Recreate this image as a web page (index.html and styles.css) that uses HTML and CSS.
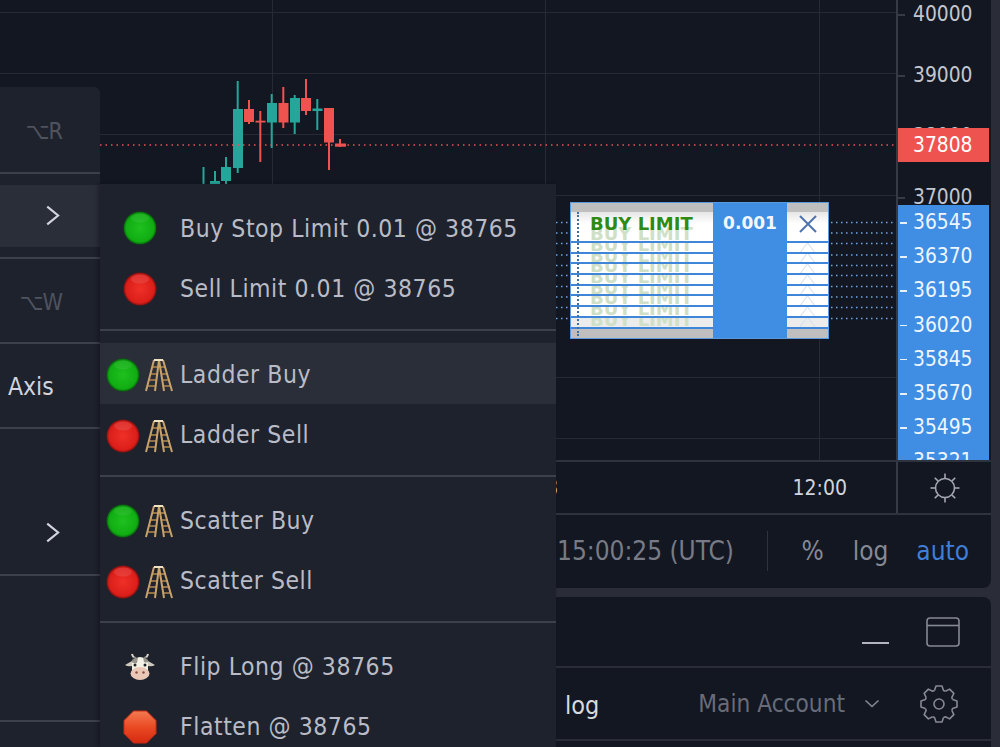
FILE: index.html
```html
<!DOCTYPE html>
<html lang="en">
<head>
<meta charset="utf-8">
<title>Chart order menu</title>
<link rel="stylesheet" href="styles.css">
</head>
<body class="page">
<svg class="defs" width="0" height="0" aria-hidden="true">
  <defs>
    <radialGradient id="g-green" cx="50%" cy="50%" r="50%">
      <stop offset="0" stop-color="#1fc01f"/><stop offset=".85" stop-color="#10ad12"/><stop offset="1" stop-color="#075c0c"/>
    </radialGradient>
    <radialGradient id="g-red" cx="50%" cy="50%" r="50%">
      <stop offset="0" stop-color="#ee3028"/><stop offset=".85" stop-color="#dc1e1a"/><stop offset="1" stop-color="#7e100e"/>
    </radialGradient>
    <linearGradient id="g-stop" x1="0" y1="0" x2="0" y2="1">
      <stop offset="0" stop-color="#f27a50"/><stop offset=".5" stop-color="#ea4a24"/><stop offset="1" stop-color="#d52a10"/>
    </linearGradient>
    <symbol id="ball-green" viewBox="0 0 34 34">
      <circle cx="17" cy="17" r="16.5" fill="url(#g-green)"/>
      <ellipse cx="17" cy="7" rx="9" ry="4.5" fill="#fff" opacity=".07"/>
    </symbol>
    <symbol id="ball-red" viewBox="0 0 34 34">
      <circle cx="17" cy="17" r="16.5" fill="url(#g-red)"/>
      <ellipse cx="17" cy="7" rx="9" ry="4.5" fill="#fff" opacity=".1"/>
    </symbol>
    <symbol id="ladder" viewBox="0 0 28 34">
      <g fill="none" stroke-width="2">
        <path d="M8 9 H13 M6 16 H12 M4.5 22 H11 M3 28 H10 M16 9 H21 M17 16 H23 M18 22 H25 M19 28 H26" stroke="#8f6f48"/>
        <path d="M1 33 L9 2 M10 33 L14 2 M14 2 L19 33 M18 2 L27 33" stroke="#c9a26a"/>
        <path d="M9 2 H18" stroke="#efe2c4"/>
      </g>
    </symbol>
    <symbol id="cow" viewBox="0 0 32 30">
      <path d="M8 3 Q9 7 12 7 M24 3 Q23 7 20 7" fill="none" stroke="#d9d6cc" stroke-width="2"/>
      <path d="M1 14 L8 10 L8 15 Q4 16 1 14 Z M31 14 L24 10 L24 15 Q28 16 31 14 Z" fill="#cfcabd"/>
      <path d="M8 9 Q16 3 24 9 L24 20 L8 20 Z" fill="#f3f0e6"/>
      <path d="M8 7 Q11 5 14 6 L13 12 Q9 13 8 11 Z M24 7 Q21 5 19 6 L20 11 Q23 12 24 11 Z" fill="#3b3836" opacity=".5"/>
      <ellipse cx="16" cy="22.5" rx="9.5" ry="6.5" fill="#e9c8b8"/>
      <circle cx="12.5" cy="21.5" r="1.2" fill="#8a4a3e"/><circle cx="19.5" cy="21.5" r="1.2" fill="#8a4a3e"/>
      <circle cx="11" cy="14" r="1.5" fill="#222"/><circle cx="21" cy="14" r="1.5" fill="#222"/>
    </symbol>
    <symbol id="stop" viewBox="0 0 34 34">
      <path d="M10.5 1 H23.5 L33 10.5 V23.5 L23.5 33 H10.5 L1 23.5 V10.5 Z" fill="url(#g-stop)" stroke="#c92a12" stroke-width="1" stroke-linejoin="round"/>
    </symbol>
    <symbol id="chev-right" viewBox="0 0 14 18">
      <path d="M2.5 2 L11 9 L2.5 16" fill="none" stroke="#d1d4dc" stroke-width="1.7"/>
    </symbol>
    <path id="tooth" d="M-4.5-13.6 L-3-18 H3 L4.5-13.6 L6.43-12.8" fill="none" stroke="#868993" stroke-width="1.6" stroke-linejoin="round"/>
    <path id="ray" d="M0-10 V-14.5" fill="none" stroke="#a3a6af" stroke-width="1.6"/>
  </defs>
</svg>

<section class="panel panel-chart">
  <div class="chart-row">
    <div class="plot">
      <svg class="plot-svg" width="896" height="460" viewBox="0 0 896 460" aria-hidden="true">
        <g class="grid">
          <path d="M0 12.5H896M0 73.5H896M0 134.5H896M0 195.5H896M0 377.5H896M0 438.5H896M272.5 0V460M545.5 0V460M819.5 0V468"/>
        </g>
        <g class="wick-up">
          <path d="M203.5 167V184M215 171V184M226 157V184M237.7 81V173M271.7 94V148M294.7 95V134M317.3 99V130"/>
        </g>
        <g class="wick-down">
          <path d="M249 100V124M260.3 111V162M283.3 87V128M306 79V115M329 108V170M340 139V147"/>
        </g>
        <g class="body-up">
          <rect x="210" y="181" width="10" height="3"/><rect x="221" y="167" width="10" height="14"/><rect x="233" y="109" width="10" height="59"/><rect x="267" y="103" width="10" height="19.5"/><rect x="290" y="98" width="10" height="24.5"/><rect x="312.5" y="108.5" width="10" height="2.5"/>
        </g>
        <g class="body-down">
          <rect x="244" y="109" width="10" height="13"/><rect x="255.5" y="120.7" width="10" height="1.8"/><rect x="278.5" y="103" width="10" height="19.5"/><rect x="301" y="98" width="10" height="13"/><rect x="324" y="108" width="10" height="34.5"/><rect x="335" y="143.5" width="11" height="3.2"/>
        </g>
        <path class="dots-red" d="M100 145H896"/>
        <path class="dots-blue" d="M556 222.5H896M556 233H896M556 243.5H896M556 255H896M556 265.5H896M556 275.5H896M556 286.5H896M556 297H896M556 307.5H896M556 318.5H896"/>
      </svg>
      <div class="order">
        <div class="order-col order-label">
          <div class="strip"></div>
          <div class="order-main">
            <span class="order-ghost">BUY LIMIT</span>
            <span class="order-title">BUY LIMIT</span>
          </div>
          <div class="order-row"><span class="order-ghost">BUY LIMIT</span></div>
          <div class="order-row"><span class="order-ghost">BUY LIMIT</span></div>
          <div class="order-row"><span class="order-ghost">BUY LIMIT</span></div>
          <div class="order-row"><span class="order-ghost">BUY LIMIT</span></div>
          <div class="order-row"><span class="order-ghost">BUY LIMIT</span></div>
          <div class="order-row"><span class="order-ghost">BUY LIMIT</span></div>
          <div class="order-row"><span class="order-ghost">BUY LIMIT</span></div>
          <div class="order-row order-row-last"><span class="order-ghost">BUY LIMIT</span></div>
          <div class="strip"></div>
        </div>
        <div class="order-qty">0.001</div>
        <div class="order-col order-close">
          <div class="strip"></div>
          <div class="order-main">
            <svg class="close-x" width="20" height="20" viewBox="0 0 20 20" aria-hidden="true"><path d="M2 2L18 18M18 2L2 18"/></svg>
          </div>
          <div class="order-row"><span class="ghost-chev"></span></div>
          <div class="order-row"><span class="ghost-chev"></span></div>
          <div class="order-row"><span class="ghost-chev"></span></div>
          <div class="order-row"><span class="ghost-chev"></span></div>
          <div class="order-row"><span class="ghost-chev"></span></div>
          <div class="order-row"><span class="ghost-chev"></span></div>
          <div class="order-row"><span class="ghost-chev"></span></div>
          <div class="order-row order-row-last"><span class="ghost-chev"></span></div>
          <div class="strip"></div>
        </div>
      </div>
    </div>
    <div class="axis">
      <div class="axis-ticks">
        <div class="tick">40000</div>
        <div class="tick">39000</div>
        <div class="tick">38000</div>
        <div class="tick">37000</div>
      </div>
      <div class="badge-last">37808</div>
      <div class="axis-orders">
        <div class="tick-o">36545</div>
        <div class="tick-o">36370</div>
        <div class="tick-o">36195</div>
        <div class="tick-o">36020</div>
        <div class="tick-o">35845</div>
        <div class="tick-o">35670</div>
        <div class="tick-o">35495</div>
        <div class="tick-o">35321</div>
      </div>
    </div>
  </div>
  <div class="time-row">
    <div class="time-labels">
      <span class="time-clip">8</span>
      <span class="time-label">12:00</span>
    </div>
    <div class="time-corner">
      <svg width="32" height="32" viewBox="-16 -16 32 32" aria-hidden="true">
        <circle r="9.5" fill="none" stroke="#a3a6af" stroke-width="1.6"/>
        <use href="#ray"/><use href="#ray" transform="rotate(45)"/><use href="#ray" transform="rotate(90)"/><use href="#ray" transform="rotate(135)"/>
        <use href="#ray" transform="rotate(180)"/><use href="#ray" transform="rotate(225)"/><use href="#ray" transform="rotate(270)"/><use href="#ray" transform="rotate(315)"/>
      </svg>
    </div>
  </div>
  <div class="status-row">
    <span class="clock">15:00:25 (UTC)</span>
    <span class="status-sep"></span>
    <span class="status-item status-pct">%</span>
    <span class="status-item status-log">log</span>
    <span class="status-auto">auto</span>
  </div>
</section>

<section class="panel panel-account">
  <div class="account-head">
    <span class="win-min"></span>
    <svg class="win-max" width="34" height="30" viewBox="0 0 34 30" aria-hidden="true">
      <rect x="1" y="1" width="32" height="28" rx="3"/><path d="M1 8.5H33"/>
    </svg>
  </div>
  <div class="account-row">
    <span class="tab-log">log</span>
    <span class="account-name">Main Account</span>
    <svg class="account-chev" width="16" height="10" viewBox="0 0 16 10" aria-hidden="true"><path d="M1.5 1.5L8 7.5L14.5 1.5"/></svg>
    <svg class="account-gear" width="40" height="40" viewBox="-20 -20 40 40" aria-hidden="true">
      <circle r="5" fill="none" stroke="#868993" stroke-width="1.6"/>
      <use href="#tooth"/><use href="#tooth" transform="rotate(45)"/><use href="#tooth" transform="rotate(90)"/><use href="#tooth" transform="rotate(135)"/>
      <use href="#tooth" transform="rotate(180)"/><use href="#tooth" transform="rotate(225)"/><use href="#tooth" transform="rotate(270)"/><use href="#tooth" transform="rotate(315)"/>
    </svg>
  </div>
</section>

<nav class="side-menu">
  <div class="side-row side-row-first"><span class="shortcut">⌥R</span></div>
  <div class="side-row side-row-active"><span class="side-hi"><svg class="side-chev" width="18" height="23" aria-hidden="true"><use href="#chev-right"/></svg></span></div>
  <div class="side-row"><span class="shortcut">⌥W</span></div>
  <div class="side-row"><span class="side-text">Axis</span></div>
  <div class="side-row side-row-tall"><svg class="side-chev" width="18" height="23" aria-hidden="true"><use href="#chev-right"/></svg></div>
  <div class="side-row side-row-blank"></div>
  <div class="side-row side-row-end"></div>
</nav>

<div class="submenu">
  <div class="sub-section">
    <div class="sub-item"><span class="sub-icons"><svg width="34" height="34" aria-hidden="true"><use href="#ball-green"/></svg></span><span>Buy Stop Limit 0.01 @ 38765</span></div>
    <div class="sub-item"><span class="sub-icons"><svg width="34" height="34" aria-hidden="true"><use href="#ball-red"/></svg></span><span>Sell Limit 0.01 @ 38765</span></div>
  </div>
  <div class="sub-section">
    <div class="sub-item sub-item-hover"><span class="sub-icons sub-icons-pair"><svg width="34" height="34" aria-hidden="true"><use href="#ball-green"/></svg><svg width="28" height="34" aria-hidden="true"><use href="#ladder"/></svg></span><span>Ladder Buy</span></div>
    <div class="sub-item"><span class="sub-icons sub-icons-pair"><svg width="34" height="34" aria-hidden="true"><use href="#ball-red"/></svg><svg width="28" height="34" aria-hidden="true"><use href="#ladder"/></svg></span><span>Ladder Sell</span></div>
  </div>
  <div class="sub-section">
    <div class="sub-item"><span class="sub-icons sub-icons-pair"><svg width="34" height="34" aria-hidden="true"><use href="#ball-green"/></svg><svg width="28" height="34" aria-hidden="true"><use href="#ladder"/></svg></span><span>Scatter Buy</span></div>
    <div class="sub-item"><span class="sub-icons sub-icons-pair"><svg width="34" height="34" aria-hidden="true"><use href="#ball-red"/></svg><svg width="28" height="34" aria-hidden="true"><use href="#ladder"/></svg></span><span>Scatter Sell</span></div>
  </div>
  <div class="sub-section sub-section-end">
    <div class="sub-item"><span class="sub-icons"><svg width="32" height="30" aria-hidden="true"><use href="#cow"/></svg></span><span>Flip Long @ 38765</span></div>
    <div class="sub-item"><span class="sub-icons"><svg width="34" height="34" aria-hidden="true"><use href="#stop"/></svg></span><span>Flatten @ 38765</span></div>
  </div>
</div>
</body>
</html>
```

FILE: styles.css
```css
* { box-sizing: border-box; }
html, body { margin: 0; padding: 0; }
.page {
  position: relative;
  width: 1000px;
  height: 747px;
  overflow: hidden;
  padding-right: 9px;
  display: flex;
  flex-direction: column;
  gap: 9px;
  background: #2a2d38;
  font-family: "DejaVu Sans Condensed", "DejaVu Sans", sans-serif;
  font-stretch: condensed;
  color: #c3c6cf;
}
.defs { position: absolute; }
.panel { background: #131722; }
.panel-chart { height: 588px; flex: none; border-bottom-right-radius: 8px; display: flex; flex-direction: column; }
.panel-account { flex: 1; border-top-right-radius: 8px; display: flex; flex-direction: column; }

.chart-row { display: flex; height: 460px; flex: none; }
.plot { position: relative; width: 896px; flex: none; }
.plot-svg { display: block; }
.grid path { fill: none; stroke: #262a35; stroke-width: 1; }
.wick-up path { fill: none; stroke: #26a69a; stroke-width: 2; }
.wick-down path { fill: none; stroke: #ef5350; stroke-width: 2; }
.body-up rect { fill: #26a69a; }
.body-down rect { fill: #ef5350; }
.dots-red { fill: none; stroke: #ef5350; stroke-width: 1.5; stroke-dasharray: 1.5 4; }
.dots-blue { fill: none; stroke: #6da9ea; stroke-width: 1.5; stroke-dasharray: 1.5 3.5; }

.order {
  position: absolute;
  left: 570px;
  top: 202px;
  width: 259px;
  height: 137px;
  display: flex;
  border: 1px solid #5c9ae0;
  background: #3f8ee4;
  font-family: "DejaVu Sans", sans-serif;
  font-stretch: normal;
  font-weight: 700;
}
.order-col { display: flex; flex-direction: column; overflow: hidden; position: relative; }
.order-label { width: 142px; }
.order-close { width: 41px; }
.order-label::before {
  content: "";
  position: absolute;
  z-index: 2;
  left: 6px;
  top: 9px;
  bottom: 2px;
  border-left: 2px dotted #3f6fa8;
}
.strip { height: 9px; flex: none; background: #bfbfbf; }
.order-main {
  height: 31px;
  flex: none;
  position: relative;
  background: linear-gradient(#e6e6e6, #fff 40%);
  border-bottom: 2px solid #3f85d8;
  overflow: hidden;
}
.order-title { position: absolute; left: 19px; top: 2px; font-size: 18px; line-height: 20px; color: #2f8a12; }
.order-ghost { font-size: 18px; line-height: 20px; color: #cfe0c6; white-space: nowrap; }
.order-main .order-ghost { position: absolute; left: 19px; top: 12px; }
.order-row {
  height: 10.7px;
  flex: none;
  position: relative;
  background: #fff;
  border-bottom: 2px solid #3f85d8;
  overflow: hidden;
}
.order-row .order-ghost { position: absolute; left: 19px; top: -8px; }
.order-row-last { background: #ececec; }
.order-qty { width: 74px; padding-top: 10px; text-align: center; font-size: 17px; line-height: 20px; color: #f2f7fd; }
.close-x { position: absolute; left: 11px; top: 2px; }
.close-x path { fill: none; stroke: #4f74ad; stroke-width: 2; }
.ghost-chev {
  position: absolute;
  left: 14px;
  top: 2.5px;
  width: 13px;
  height: 13px;
  border-left: 1.5px solid #d5dfee;
  border-top: 1.5px solid #d5dfee;
  transform: rotate(45deg) skew(8deg, 8deg);
}

.axis { position: relative; flex: 1; border-left: 2px solid #363a45; overflow: hidden; }
.axis-ticks { margin-top: -16.5px; }
.tick, .tick-o { position: relative; padding-left: 15px; font-size: 20.8px; }
.tick { height: 61px; line-height: 61px; color: #c3c6cf; }
.tick::before, .tick-o::before {
  content: "";
  position: absolute;
  left: 0;
  top: 50%;
  width: 7px;
  height: 1.5px;
  background: #363a45;
}
.tick-o::before { background: #e8f1fb; left: 2px; }
.badge-last {
  position: absolute;
  left: 0;
  top: 128px;
  width: 91px;
  height: 34px;
  padding-left: 15px;
  font-size: 20.8px;
  line-height: 34px;
  background: #ef5350;
  color: #fff;
}
.axis-orders {
  position: absolute;
  left: 0;
  top: 205px;
  width: 91px;
  height: 255px;
  overflow: hidden;
  background: #3f8ee4;
  color: #eef5fd;
}
.tick-o { height: 34.2px; line-height: 35px; }

.time-row { display: flex; height: 55px; flex: none; border-top: 2px solid #2f333e; border-bottom: 2px solid #2f333e; }
.time-labels { width: 896px; flex: none; display: flex; align-items: center; padding-right: 49px; font-size: 21px; }
.time-clip { width: 558px; text-align: right; color: #d1d4dc; }
.time-label { margin-left: auto; color: #d1d4dc; }
.time-corner { flex: 1; border-left: 2px solid #363a45; display: flex; align-items: center; justify-content: center; }

.status-row { flex: 1; display: flex; align-items: center; justify-content: flex-end; padding: 0 22px 1px 0; font-size: 26px; color: #787b86; }
.status-sep { width: 1.5px; height: 40px; margin: 0 33px 0 33px; background: #2f333e; }
.status-item { color: #868993; }
.status-pct { margin-right: 29px; }
.status-log { margin-right: 28px; }
.status-auto { color: #3f7fd6; }

.account-head { height: 71px; flex: none; position: relative; display: flex; align-items: center; justify-content: flex-end; padding-right: 31px; gap: 37px; border-bottom: 2px solid #2a2d38; }
.win-min { width: 27px; height: 2px; margin-top: 23px; background: #b2b5be; }
.win-max { margin-top: 1px; }
.win-max rect, .win-max path { fill: none; stroke: #868993; stroke-width: 1.6; }
.account-row { height: 73px; flex: none; display: flex; align-items: center; padding-right: 32px; border-bottom: 2px solid #2a2d38; }
.tab-log { margin-left: 565px; padding-top: 3px; font-size: 25px; color: #d8dae0; }
.account-name { margin-left: auto; font-size: 24.2px; color: #686c78; }
.account-chev { margin-left: 19px; }
.account-chev path { fill: none; stroke: #868993; stroke-width: 1.6; }
.account-gear { margin-left: 39px; }

.side-menu {
  position: absolute;
  left: 0;
  top: 87px;
  width: 100px;
  height: 660px;
  display: flex;
  flex-direction: column;
  background: #1e222d;
  border-top-right-radius: 6px;
}
.side-row { height: 85.3px; flex: none; display: flex; align-items: center; border-bottom: 2px solid #3c404b; }
.side-row-first { height: 86.5px; }
.side-row-active { position: relative; }
.side-hi { position: absolute; left: 0; right: 0; top: 11px; height: 62px; background: #2a2e39; display: flex; align-items: center; }
.side-row-tall { height: 147px; padding-top: 62px; }
.side-row-blank { height: 146px; }
.side-row-end { flex: 1; border-bottom: 0; }
.side-chev { margin-left: 44px; }
.shortcut { width: 62px; padding-top: 4px; text-align: right; font-size: 23px; color: #4f535e; letter-spacing: -1px; }
.side-text { margin-left: 8px; padding-top: 1px; font-size: 24.5px; color: #d1d4dc; }

.submenu {
  position: absolute;
  left: 100px;
  top: 184px;
  width: 456px;
  height: 563px;
  padding-top: 1px;
  background: #1e222d;
  box-shadow: -2px 0 4px rgba(0, 0, 0, .3);
  font-size: 24.5px;
  color: #b9bcc6;
}
.sub-section { height: 146px; padding: 12px 0; border-bottom: 2px solid #3c404b; }
.sub-section-end { height: auto; border-bottom: 0; }
.sub-item { height: 60.5px; padding-top: 2px; display: flex; align-items: center; letter-spacing: .55px; }
.sub-item-hover { background: #2a2e39; }
.sub-icons { width: 80px; flex: none; display: flex; align-items: center; justify-content: center; gap: 5px; padding-right: 1px; }
.sub-icons-pair { padding-top: 2px; }
```
